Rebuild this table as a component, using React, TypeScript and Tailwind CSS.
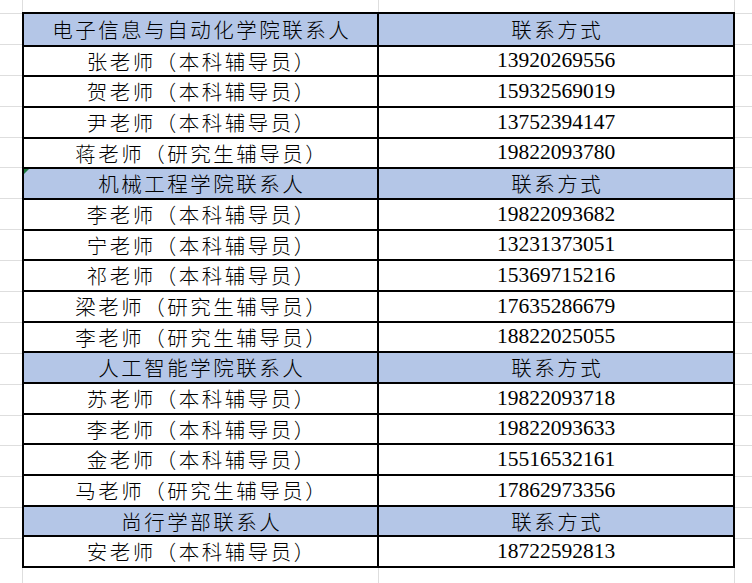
// Contact sheet rendered like a spreadsheet range: light gridlines around a
// thick black bordered table with blue section headers.

type Row = { name: string; phone: string; header?: boolean; flag?: boolean }

const rows: Row[] = [
  { name: '电子信息与自动化学院联系人', phone: '联系方式', header: true },
  { name: '张老师（本科辅导员）', phone: '13920269556' },
  { name: '贺老师（本科辅导员）', phone: '15932569019' },
  { name: '尹老师（本科辅导员）', phone: '13752394147' },
  { name: '蒋老师（研究生辅导员）', phone: '19822093780' },
  { name: '机械工程学院联系人', phone: '联系方式', header: true, flag: true },
  { name: '李老师（本科辅导员）', phone: '19822093682' },
  { name: '宁老师（本科辅导员）', phone: '13231373051' },
  { name: '祁老师（本科辅导员）', phone: '15369715216' },
  { name: '梁老师（研究生辅导员）', phone: '17635286679' },
  { name: '李老师（研究生辅导员）', phone: '18822025055' },
  { name: '人工智能学院联系人', phone: '联系方式', header: true },
  { name: '苏老师（本科辅导员）', phone: '19822093718' },
  { name: '李老师（本科辅导员）', phone: '19822093633' },
  { name: '金老师（本科辅导员）', phone: '15516532161' },
  { name: '马老师（研究生辅导员）', phone: '17862973356' },
  { name: '尚行学部联系人', phone: '联系方式', header: true },
  { name: '安老师（本科辅导员）', phone: '18722592813' },
]

const cjk = "font-['Noto_Sans_CJK_SC','Noto_Sans',sans-serif] font-light"
const num = "font-['Liberation_Serif','Noto_Sans_CJK_SC',serif]"

/** Strip of light gridlines beside the table, one line per row. */
function SideStrip({ width }: { width: string }) {
  return (
    <div className={`${width} h-[556px] grid grid-rows-[repeat(18,minmax(0,1fr))] shrink-0`}>
      {rows.map((_, i) => (
        <div key={i} className="border-t border-[#dedede] mt-px" />
      ))}
    </div>
  )
}

/** Strip above / below the table: only the column lines show. */
function EdgeStrip({ height }: { height: string }) {
  return (
    <div className={`${height} flex`}>
      <div className="w-[22px] shrink-0" />
      <div className="w-[356px] shrink-0 border-l border-[#dedede]" />
      <div className="w-[356px] shrink-0 border-l border-[#dedede]" />
      <div className="flex-1 border-l border-[#dedede]" />
    </div>
  )
}

export default function App() {
  return (
    <div className="w-[752px] h-[583px] bg-white overflow-hidden text-black">
      <EdgeStrip height="h-[12px]" />
      <div className="flex">
        <SideStrip width="w-[22px]" />
        <div className="w-[713px] h-[556px] border-2 border-black grid grid-rows-[repeat(18,minmax(0,1fr))] shrink-0">
          {rows.map((r, i) => (
            <div
              key={i}
              className={`grid grid-cols-[355px_1fr] ${i > 0 ? 'border-t-2 border-black' : ''} ${
                r.header ? 'bg-[#b4c6e7]' : 'bg-white'
              }`}
            >
              <div
                className={`relative border-r-2 border-black flex items-center justify-center ${cjk} text-[20.5px] tracking-[2.5px] leading-none`}
              >
                {r.flag && (
                  <span className="absolute left-0 top-0 w-0 h-0 border-t-[5px] border-r-[5px] border-t-[#1f7a3f] border-r-transparent" />
                )}
                <span className="pl-[2.5px]">{r.name}</span>
              </div>
              <div
                className={`flex items-center justify-center leading-none ${
                  r.header ? `${cjk} text-[20.5px] tracking-[2.5px]` : `${num} text-[21.5px]`
                }`}
              >
                <span className={r.header ? 'pl-[2.5px]' : ''}>{r.phone}</span>
              </div>
            </div>
          ))}
        </div>
        <SideStrip width="flex-1" />
      </div>
      <EdgeStrip height="h-[15px]" />
    </div>
  )
}
